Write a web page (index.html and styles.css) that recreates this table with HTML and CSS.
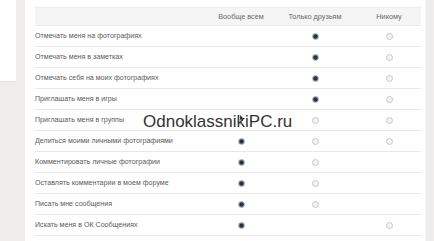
FILE: index.html
```html
<!DOCTYPE html>
<html lang="ru">
<head>
<meta charset="utf-8">
<link rel="stylesheet" href="styles.css">
</head>
<body>
<div class="page">
  <aside class="side">
    <div class="side-box"></div>
  </aside>
  <main class="main">
    <div class="table">
      <div class="row head">
        <div class="label"></div>
        <div class="cell">Вообще всем</div>
        <div class="cell">Только друзьям</div>
        <div class="cell c3">Никому</div>
      </div>
      <div class="row">
        <div class="label">Отмечать меня на фотографиях</div>
        <div class="cell"></div>
        <div class="cell"><span class="radio on"></span></div>
        <div class="cell c3"><span class="radio"></span></div>
      </div>
      <div class="row">
        <div class="label">Отмечать меня в заметках</div>
        <div class="cell"></div>
        <div class="cell"><span class="radio on"></span></div>
        <div class="cell c3"><span class="radio"></span></div>
      </div>
      <div class="row">
        <div class="label">Отмечать себя на моих фотографиях</div>
        <div class="cell"></div>
        <div class="cell"><span class="radio on"></span></div>
        <div class="cell c3"><span class="radio"></span></div>
      </div>
      <div class="row">
        <div class="label">Приглашать меня в игры</div>
        <div class="cell"></div>
        <div class="cell"><span class="radio on"></span></div>
        <div class="cell c3"><span class="radio"></span></div>
      </div>
      <div class="row">
        <div class="label">Приглашать меня в группы</div>
        <div class="cell"></div>
        <div class="cell"><span class="radio"></span></div>
        <div class="cell c3"><span class="radio"></span></div>
      </div>
      <div class="row">
        <div class="label">Делиться моими личными фотографиями</div>
        <div class="cell"><span class="radio on"></span></div>
        <div class="cell"><span class="radio"></span></div>
        <div class="cell c3"><span class="radio"></span></div>
      </div>
      <div class="row">
        <div class="label">Комментировать личные фотографии</div>
        <div class="cell"><span class="radio on"></span></div>
        <div class="cell"><span class="radio"></span></div>
        <div class="cell c3"></div>
      </div>
      <div class="row">
        <div class="label">Оставлять комментарии в моем форуме</div>
        <div class="cell"><span class="radio on"></span></div>
        <div class="cell"><span class="radio"></span></div>
        <div class="cell c3"></div>
      </div>
      <div class="row">
        <div class="label">Писать мне сообщения</div>
        <div class="cell"><span class="radio on"></span></div>
        <div class="cell"><span class="radio"></span></div>
        <div class="cell c3"></div>
      </div>
      <div class="row">
        <div class="label">Искать меня в ОК Сообщениях</div>
        <div class="cell"><span class="radio on"></span></div>
        <div class="cell"></div>
        <div class="cell c3"><span class="radio"></span></div>
      </div>
    </div>
  </main>
  <div class="edge"></div>
</div>
<div class="watermark">OdnoklassnikiPC.ru</div>
<svg class="cursor" width="4" height="6" viewBox="0 0 5 8"><path d="M0 0 L0 7 L1.6 5.4 L2.8 8 L3.6 7.6 L2.5 5.1 L4.6 5.1 Z" fill="#222"/></svg>
</body>
</html>
```
FILE: styles.css
```css
html, body {
  margin: 0;
  padding: 0;
}
body {
  width: 434px;
  height: 241px;
  overflow: hidden;
  background: #eeedeb;
  font-family: "Liberation Sans", Arial, sans-serif;
  position: relative;
}
.page {
  display: flex;
  height: 241px;
}
.side {
  width: 25px;
  flex: none;
}
.side-box {
  width: 16px;
  height: 81px;
  background: #fff;
  border-bottom: 1px solid #e2e1df;
}
.main {
  width: 390px;
  flex: none;
  background: #fff;
  padding: 7px 0 0 10px;
}
.edge {
  width: 9px;
  flex: none;
  background: #eeedec;
  border-left: 1px solid #f4f4f4;
}
.table {
  width: 386px;
  border-top: 1px solid #ececec;
}
.row {
  display: grid;
  grid-template-columns: 169px 74px 74px 69px;
  height: 20px;
  align-items: center;
  border-bottom: 1px solid #e8e8e8;
}
.row.head {
  height: 17px;
  background: #f5f5f5;
  border-bottom: 1px solid #ebebeb;
}
.label {
  font-size: 7.1px;
  color: #5a5a5a;
  white-space: nowrap;
}
.cell {
  display: flex;
  justify-content: center;
  align-items: center;
  font-size: 7.3px;
  color: #6a6a6a;
  white-space: nowrap;
}
.cell.c3 {
  padding-left: 5px;
}
.radio {
  display: block;
  width: 5px;
  height: 5px;
  border-radius: 50%;
  border: 1px solid #c8c8c8;
  background: #f3f3f3;
}
.radio.on {
  border-color: #a3a9b0;
  background: radial-gradient(circle, #26303a 0 1.5px, #5d6873 2.2px);
}
.watermark {
  position: absolute;
  left: 143px;
  top: 113px;
  font-size: 17px;
  line-height: 1;
  color: #333;
  white-space: nowrap;
}
.cursor {
  position: absolute;
  left: 240px;
  top: 115px;
}
```
